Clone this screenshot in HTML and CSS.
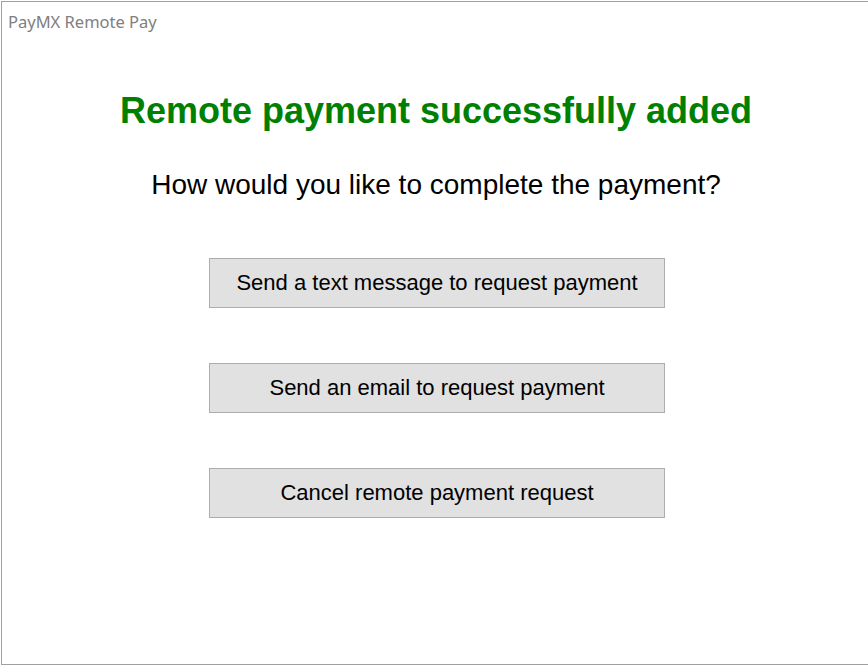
FILE: index.html
```html
<!DOCTYPE html>
<html lang="en">
<head>
    <meta charset="UTF-8">
    <meta name="viewport" content="width=device-width, initial-scale=1.0">
    <title>PayMX Remote Pay</title>
    <link rel="stylesheet" href="styles.css">
</head>
<body>
    <div class="window">
        <div class="title-bar">PayMX Remote Pay</div>
        <div class="content">
            <h1>Remote payment successfully added</h1>
            <p class="question">How would you like to complete the payment?</p>
            <div class="actions">
                <button class="action">Send a text message to request payment</button>
                <button class="action">Send an email to request payment</button>
                <button class="action">Cancel remote payment request</button>
            </div>
        </div>
    </div>
</body>
</html>
```

FILE: styles.css
```css
html, body {
    margin: 0;
    height: 100%;
    background-color: white;
}
body {
    padding-top: 1px;
    padding-left: 1px;
    box-sizing: border-box;
}
.window {
    height: 664px;
    box-sizing: border-box;
    border: 1px solid #a0a0a0;
    border-right: none;
    background-color: white;
}
.title-bar {
    font-family: "Noto Sans", sans-serif;
    font-size: 16.5px;
    color: #808080;
    padding: 8px 0 0 6px;
    height: 30px;
    box-sizing: border-box;
}
.content {
    font-family: "Liberation Sans", Arial, sans-serif;
    text-align: center;
    padding-left: 2px;
}
h1 {
    color: #008000;
    font-size: 36px;
    font-weight: bold;
    margin: 58px 0 0;
    line-height: 41px;
}
.question {
    font-size: 28px;
    margin: 38px 0 0;
    line-height: 32px;
}
.actions {
    display: flex;
    flex-direction: column;
    align-items: center;
    gap: 55px;
    margin-top: 57px;
    padding-left: 2px;
}
.action {
    width: 456px;
    height: 50px;
    background-color: #e1e1e1;
    border: 1px solid #adadad;
    font-family: "Liberation Sans", Arial, sans-serif;
    font-size: 22px;
    color: black;
    padding: 0;
}
```
